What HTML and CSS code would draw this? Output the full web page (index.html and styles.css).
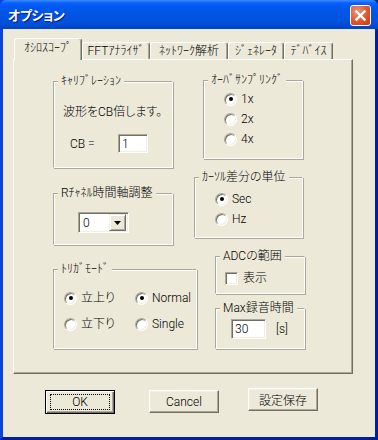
FILE: index.html
```html
<!DOCTYPE html>
<html lang="ja">
<head>
  <meta charset="UTF-8">
  <title>オプション</title>
  <link rel="stylesheet" href="styles.css">
</head>
<body>
  <div class="window">
    <div class="titlebar">
      <span class="title">オプション</span>
      <span class="close-btn">
        <svg width="13" height="13" viewBox="0 0 13 13"><path d="M2.5 2.5 L10.5 10.5 M10.5 2.5 L2.5 10.5" stroke="#fff" stroke-width="2.4" stroke-linecap="square"/></svg>
      </span>
    </div>

    <div class="client">
      <div class="tabs">
        <div class="tab tab-active">ｵｼﾛｽｺｰﾌﾟ</div>
        <div class="tab">FFTｱﾅﾗｲｻﾞ</div>
        <div class="tab">ﾈｯﾄﾜｰｸ解析</div>
        <div class="tab">ｼﾞｪﾈﾚｰﾀ</div>
        <div class="tab">ﾃﾞﾊﾞｲｽ</div>
      </div>

      <div class="panel">
        <div class="col-left">
          <fieldset class="group group-cal">
            <legend>ｷｬﾘﾌﾞﾚｰｼｮﾝ</legend>
            <div class="cal-text">波形をCB倍します。</div>
            <div class="cal-row">
              <span class="cb-label">CB =</span>
              <span class="edit edit-cb">1</span>
            </div>
          </fieldset>

          <fieldset class="group group-rch">
            <legend>Rﾁｬﾈﾙ時間軸調整</legend>
            <div class="combo">
              <span class="combo-text">0</span>
              <span class="combo-btn"><svg width="7" height="4" viewBox="0 0 7 4"><path d="M0 0 H7 L3.5 4 Z" fill="#000"/></svg></span>
            </div>
          </fieldset>

          <fieldset class="group group-trig">
            <legend>ﾄﾘｶﾞﾓｰﾄﾞ</legend>
            <div class="trig-grid">
              <label class="opt"><span class="radio checked"></span>立上り</label>
              <label class="opt"><span class="radio checked"></span>Normal</label>
              <label class="opt"><span class="radio"></span>立下り</label>
              <label class="opt"><span class="radio"></span>Single</label>
            </div>
          </fieldset>
        </div>

        <div class="col-right">
          <fieldset class="group group-over">
            <legend>ｵｰﾊﾞｻﾝﾌﾟﾘﾝｸﾞ</legend>
            <div class="opt-list">
              <label class="opt"><span class="radio checked"></span>1x</label>
              <label class="opt"><span class="radio"></span>2x</label>
              <label class="opt"><span class="radio"></span>4x</label>
            </div>
          </fieldset>

          <fieldset class="group group-cursor">
            <legend>ｶｰｿﾙ差分の単位</legend>
            <div class="opt-list">
              <label class="opt"><span class="radio checked"></span>Sec</label>
              <label class="opt"><span class="radio"></span>Hz</label>
            </div>
          </fieldset>

          <fieldset class="group group-adc">
            <legend>ADCの範囲</legend>
            <label class="opt opt-check"><span class="checkbox"></span>表示</label>
          </fieldset>

          <fieldset class="group group-max">
            <legend>Max録音時間</legend>
            <div class="max-row">
              <span class="edit edit-max">30</span>
              <span>[s]</span>
            </div>
          </fieldset>
        </div>
      </div>

      <div class="buttons">
        <button class="btn btn-default"><span class="focus">OK</span></button>
        <button class="btn">Cancel</button>
        <button class="btn btn-save">設定保存</button>
      </div>
    </div>
  </div>
</body>
</html>
```

FILE: styles.css
```css
body {
  margin: 0;
  padding: 0;
  font-family: Roboto, "Noto Sans CJK JP", sans-serif;
  font-size: 12px;
  font-weight: 300;
  font-feature-settings: "palt";
  color: #000;
  background: #fff;
}

.window {
  width: 378px;
  height: 440px;
  box-sizing: border-box;
  background: #0842d6;
  border: 3px solid #0831d9;
  border-top: none;
  border-left-color: #0a44e0;
  border-right-color: #001ea0;
  border-bottom-color: #001ea0;
  display: flex;
  flex-direction: column;
}

.titlebar {
  height: 29px;
  margin: 0 -3px;
  padding: 0 7px 0 8px;
  display: flex;
  align-items: center;
  justify-content: space-between;
  background: linear-gradient(#3d8bff 0, #0a60ff 3px, #0058ee 7px, #0054e3 16px, #004fd8 24px, #0043c4 29px);
  border-radius: 6px 6px 0 0;
}

.title {
  color: #fff;
  font-family: "Noto Sans CJK JP", sans-serif;
  font-weight: bold;
  font-size: 13px;
  letter-spacing: -0.5px;
  text-shadow: 1px 1px 0 #0a1883;
  margin-top: -1px;
}

.close-btn {
  width: 19px;
  height: 19px;
  border: 1px solid #fff;
  border-radius: 3px;
  background: radial-gradient(circle at 35% 30%, #f0957a 0, #e0552f 55%, #c23b12 100%);
  display: flex;
  align-items: center;
  justify-content: center;
  margin-top: 1px;
}

.client {
  flex: 1;
  background: #ece9d8;
  padding: 9px 0 0 10px;
}

/* tabs */
.tabs {
  display: flex;
  align-items: flex-end;
  height: 21px;
  margin-left: 1px;
}

.tab {
  box-sizing: border-box;
  height: 17px;
  border: 1px solid #fff;
  border-bottom: none;
  border-right-color: #716f64;
  box-shadow: inset -1px 0 0 #aca899;
  border-radius: 3px 3px 0 0;
  display: flex;
  align-items: center;
  justify-content: center;
  line-height: 14px;
}

.tab:nth-child(1) { width: 68px; }
.tab:nth-child(2) { width: 68px; }
.tab:nth-child(3) { width: 78px; }
.tab:nth-child(4) { width: 56px; }
.tab:nth-child(5) { width: 49px; }

.tab-active {
  position: relative;
  height: 22px;
  margin-bottom: -1px;
  background: #ece9d8;
  padding-bottom: 3px;
}

.panel {
  box-sizing: border-box;
  width: 340px;
  height: 315px;
  border: 1px solid #fff;
  border-right-color: #716f64;
  border-bottom-color: #716f64;
  box-shadow: inset -1px -1px 0 #aca899;
  display: flex;
}

.col-left {
  width: 141px;
  padding: 14px 0 0 39px;
  display: flex;
  flex-direction: column;
}

.col-right {
  padding-top: 13px;
  display: flex;
  flex-direction: column;
  align-items: flex-start;
}

/* group boxes */
.group {
  box-sizing: border-box;
  margin: 0;
  padding: 0;
  min-width: 0;
  border: 1px solid #d0d0bf;
  border-color: #aca899 #fff #fff #aca899;
  box-shadow: inset 1px 1px 0 #fff, 1px 1px 0 #aca899;
}

.group legend {
  margin-left: 4px;
  padding: 0 3px;
  line-height: 14px;
  background: #ece9d8;
}

.group-cal { width: 120px; height: 94px; }
.group-rch { width: 120px; height: 59px; margin-top: 18px; }
.group-trig { width: 144px; height: 87px; margin-top: 17px; }
.group-over { width: 100px; height: 86px; margin-left: 9px; }
.group-cursor { width: 109px; height: 68px; margin-top: 11px; }
.group-adc { width: 90px; height: 45px; margin-top: 11px; margin-left: 21px; }
.group-max { width: 90px; height: 48px; margin-top: 7px; margin-left: 21px; }

.cal-text {
  margin: 17px 0 0 9px;
  line-height: 14px;
}

.cal-row {
  display: flex;
  align-items: center;
  margin: 15px 0 0 16px;
}

.cb-label {
  width: 48px;
}

/* edit boxes */
.edit {
  box-sizing: border-box;
  background: #fff;
  border: 1px solid;
  border-color: #aca899 #fff #fff #aca899;
  box-shadow: inset 1px 1px 0 #716f64, inset -1px -1px 0 #f1efe2;
  padding: 0 3px;
  display: flex;
  align-items: center;
}

.edit-cb { width: 30px; height: 19px; }
.edit-max { width: 35px; height: 20px; }

.combo {
  box-sizing: border-box;
  width: 51px;
  height: 21px;
  margin: 12px 0 0 24px;
  background: #fff;
  border: 1px solid;
  border-color: #aca899 #fff #fff #aca899;
  box-shadow: inset 1px 1px 0 #716f64, inset -1px -1px 0 #f1efe2;
  display: flex;
  align-items: center;
  padding: 2px 2px 2px 4px;
}

.combo-text {
  flex: 1;
}

.combo-btn {
  box-sizing: border-box;
  width: 17px;
  height: 17px;
  background: #ece9d8;
  border: 1px solid;
  border-color: #f1efe2 #716f64 #716f64 #f1efe2;
  box-shadow: inset 1px 1px 0 #fff, inset -1px -1px 0 #aca899;
  display: flex;
  align-items: center;
  justify-content: center;
}

/* radios and checks */
.opt {
  display: flex;
  align-items: center;
  height: 14px;
  line-height: 14px;
}

.radio,
.checkbox {
  box-sizing: border-box;
  width: 13px;
  height: 13px;
  flex: none;
  margin-right: 4px;
  background: #fff;
  border: 1px solid;
  border-color: #aca899 #fff #fff #aca899;
  box-shadow: inset 1px 1px 0 #716f64, inset -1px -1px 0 #f1efe2;
  position: relative;
}

.radio {
  border-radius: 50%;
}

.radio.checked::after {
  content: "";
  position: absolute;
  left: 3.5px;
  top: 3.5px;
  width: 4px;
  height: 4px;
  border-radius: 50%;
  background: #000;
}

.opt-list {
  display: flex;
  flex-direction: column;
  gap: 6px;
  margin-left: 20px;
}

.group-over .opt-list { margin-top: 5px; }
.group-cursor .opt-list { margin-top: 8px; }

.trig-grid {
  display: grid;
  grid-template-columns: 71px auto;
  row-gap: 12px;
  margin: 15px 0 0 10px;
}

.opt-check {
  margin: 8px 0 0 9px;
}

.opt-check .checkbox {
  margin-right: 5px;
}

.max-row {
  display: flex;
  align-items: center;
  gap: 10px;
  margin: 4px 0 0 15px;
}

/* buttons */
.buttons {
  display: flex;
  align-items: flex-start;
  margin: 16px 0 0 32px;
}

.btn {
  box-sizing: border-box;
  width: 70px;
  height: 23px;
  padding: 0;
  font: inherit;
  color: #000;
  background: #ece9d8;
  border: 1px solid;
  border-color: #fff #716f64 #716f64 #fff;
  box-shadow: inset -1px -1px 0 #aca899, inset 1px 1px 0 #f1efe2;
  margin-right: 34px;
  display: flex;
  align-items: center;
  justify-content: center;
}

.btn-default {
  height: 24px;
  border-color: #000;
  box-shadow: inset 1px 1px 0 #fff, inset -1px -1px 0 #716f64, inset -2px -2px 0 #aca899;
}

.focus {
  box-sizing: border-box;
  width: 60px;
  height: 16px;
  border: 1px dotted #000;
  display: flex;
  align-items: center;
  justify-content: center;
}

.btn:nth-child(2) {
  margin-right: 29px;
}

.btn-save {
  margin-top: -2px;
}
```
